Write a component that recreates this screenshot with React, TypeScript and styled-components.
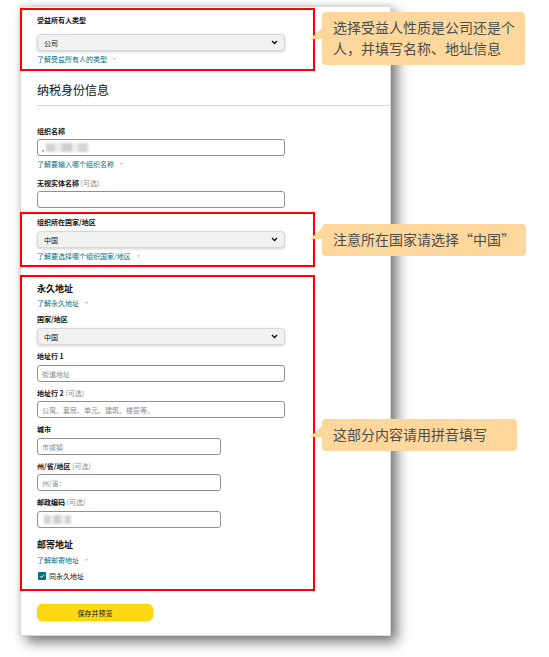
import React from 'react';
import styled, { createGlobalStyle } from 'styled-components';

const GlobalStyle = createGlobalStyle`
  html, body {
    margin: 0;
    padding: 0;
    background: #ffffff;
  }
  body {
    font-family: "Noto Sans CJK SC", "Noto Sans", "Liberation Sans", sans-serif;
    color: #0f1111;
  }
`;

const Page = styled.div`
  position: relative;
  width: 549px;
  height: 657px;
  box-sizing: border-box;
  padding: 6px 0 0 20px;
  overflow: hidden;
`;

const Card = styled.div`
  width: 371px;
  height: 630px;
  box-sizing: border-box;
  background: #ffffff;
  border: 1px solid #d9d9d9;
  box-shadow: 6px 6px 12px rgba(0, 0, 0, 0.55), -1px -1px 4px rgba(0, 0, 0, 0.08);
  padding: 1px 0 0 16px;
`;

const Marked = styled.div<{ $mt?: number; $pt: number; $pb: number }>`
  width: 295px;
  box-sizing: border-box;
  margin: ${(p) => p.$mt ?? 0}px 0 0 -17px;
  border: 2px solid #ff0000;
  padding: ${(p) => p.$pt}px 0 ${(p) => p.$pb}px 15px;
`;

const Label = styled.div<{ $mt?: number }>`
  margin-top: ${(p) => p.$mt ?? 0}px;
  font-size: 7px;
  line-height: 10px;
  font-weight: 700;
  white-space: nowrap;
`;

const Optional = styled.span`
  font-weight: 400;
  color: #8a8d8d;
`;

const Heading = styled.div<{ $mt?: number; $size: number }>`
  margin-top: ${(p) => p.$mt ?? 0}px;
  font-size: ${(p) => p.$size}px;
  line-height: ${(p) => p.$size + 4}px;
  font-weight: ${(p) => (p.$size > 10 ? 400 : 700)};
  white-space: nowrap;
`;

const Divider = styled.div`
  margin-top: 7px;
  height: 1px;
  background: #d5d5d5;
`;

const SelectBox = styled.div<{ $mt?: number }>`
  margin-top: ${(p) => p.$mt ?? 0}px;
  width: 248px;
  height: 17px;
  box-sizing: border-box;
  display: flex;
  align-items: center;
  justify-content: space-between;
  padding: 0 6px 0 6px;
  background: #f0f2f2;
  border: 1px solid #d5d9d9;
  border-radius: 4px;
  box-shadow: 0 1px 3px rgba(15, 17, 17, 0.2);
  font-size: 7px;
  line-height: 10px;
`;

const TextInput = styled.div<{ $mt?: number; $short?: boolean }>`
  margin-top: ${(p) => p.$mt ?? 0}px;
  width: ${(p) => (p.$short ? 184 : 248)}px;
  height: 17px;
  box-sizing: border-box;
  display: flex;
  align-items: center;
  padding: 0 4px;
  background: #ffffff;
  border: 1px solid #8f9393;
  border-radius: 3px;
  font-size: 7px;
  line-height: 10px;
  color: #0f1111;
`;

const Placeholder = styled.span`
  color: #8a8d8d;
`;

const Blurred = styled.span<{ $w: number }>`
  display: inline-block;
  width: ${(p) => p.$w}px;
  height: 9px;
  margin-left: 2px;
  background: linear-gradient(
    90deg,
    #d4d4d4 0 22%,
    #ececec 22% 38%,
    #cfcfcf 38% 62%,
    #eeeeee 62% 76%,
    #d6d6d6 76% 100%
  );
  filter: blur(0.8px);
`;

const HelpLink = styled.div<{ $mt?: number }>`
  margin-top: ${(p) => p.$mt ?? 0}px;
  display: flex;
  align-items: center;
  gap: 5px;
  font-size: 7px;
  line-height: 10px;
  color: #007185;
  white-space: nowrap;
`;

const CheckRow = styled.label`
  margin-top: 6px;
  display: flex;
  align-items: center;
  gap: 3px;
  padding-left: 1px;
  font-size: 7px;
  line-height: 10px;
`;

const CheckBox = styled.span`
  width: 8px;
  height: 8px;
  border-radius: 1px;
  background: #007185;
  display: flex;
  align-items: center;
  justify-content: center;
`;

const SaveButton = styled.button`
  margin-top: 13px;
  width: 116px;
  height: 17px;
  padding: 0;
  background: #ffd814;
  border: 1px solid #fcd200;
  border-radius: 5px;
  box-shadow: 0 1px 2px rgba(213, 217, 217, 0.5);
  font-family: inherit;
  font-size: 7px;
  line-height: 10px;
  color: #0f1111;
`;

const Callout = styled.div<{ $top: number; $w: number; $arrow: number }>`
  position: absolute;
  top: ${(p) => p.$top}px;
  left: 322px;
  width: ${(p) => p.$w}px;
  box-sizing: border-box;
  padding: 5px 8px 6px 11px;
  background: #fed79d;
  border-radius: 4px;
  font-size: 14px;
  line-height: 21px;
  color: #4d4d4d;

  &::before {
    content: '';
    position: absolute;
    left: -12px;
    top: ${(p) => p.$arrow}px;
    border-top: 11px solid transparent;
    border-right: 12px solid #fed79d;
  }
`;

const Chevron = ({ small }: { small?: boolean }) =>
  small ? (
    <svg width="5" height="4" viewBox="0 0 5 4">
      <path d="M1 1l1.5 1.5L4 1" fill="none" stroke="#9aa0a0" strokeWidth="0.8" />
    </svg>
  ) : (
    <svg width="7" height="5" viewBox="0 0 7 5">
      <path d="M1 1l2.5 2.5L6 1" fill="none" stroke="#0f1111" strokeWidth="1.4" />
    </svg>
  );

const Check = () => (
  <svg width="6" height="6" viewBox="0 0 6 6">
    <path d="M1 3.2l1.4 1.4L5 1.6" fill="none" stroke="#ffffff" strokeWidth="1" />
  </svg>
);

const Select = ({ value, mt }: { value: string; mt: number }) => (
  <SelectBox $mt={mt}>
    <span>{value}</span>
    <Chevron />
  </SelectBox>
);

const Help = ({ text, mt }: { text: string; mt: number }) => (
  <HelpLink $mt={mt}>
    <span>{text}</span>
    <Chevron small />
  </HelpLink>
);

export default function App() {
  return (
    <Page>
      <GlobalStyle />
      <Card>
        <Marked $pt={5} $pb={5}>
          <Label>受益所有人类型</Label>
          <Select value="公司" mt={9} />
          <Help text="了解受益所有人的类型" mt={3} />
        </Marked>

        <Heading $size={12} $mt={11}>纳税身份信息</Heading>
        <Divider />

        <Label $mt={20}>组织名称</Label>
        <TextInput $mt={3}>
          <span>,</span>
          <Blurred $w={42} />
        </TextInput>
        <Help text="了解要输入哪个组织名称" mt={3} />
        <Label $mt={9}>
          无视实体名称 <Optional>(可选)</Optional>
        </Label>
        <TextInput $mt={3} />

        <Marked $mt={4} $pt={3} $pb={4}>
          <Label>组织所在国家/地区</Label>
          <Select value="中国" mt={4} />
          <Help text="了解要选择哪个组织国家/地区" mt={3} />
        </Marked>

        <Marked $mt={8} $pt={5} $pb={8}>
          <Heading $size={9}>永久地址</Heading>
          <Help text="了解永久地址" mt={3} />
          <Label $mt={6}>国家/地区</Label>
          <Select value="中国" mt={4} />
          <Label $mt={6}>地址行 1</Label>
          <TextInput $mt={4}>
            <Placeholder>街道地址</Placeholder>
          </TextInput>
          <Label $mt={6}>
            地址行 2 <Optional>(可选)</Optional>
          </Label>
          <TextInput $mt={3}>
            <Placeholder>公寓、套房、单元、建筑、楼层等。</Placeholder>
          </TextInput>
          <Label $mt={6}>城市</Label>
          <TextInput $mt={4} $short>
            <Placeholder>市或镇</Placeholder>
          </TextInput>
          <Label $mt={6}>
            州/省/地区 <Optional>(可选)</Optional>
          </Label>
          <TextInput $mt={3} $short>
            <Placeholder>州/省：</Placeholder>
          </TextInput>
          <Label $mt={6}>
            邮政编码 <Optional>(可选)</Optional>
          </Label>
          <TextInput $mt={4} $short>
            <Blurred $w={27} />
          </TextInput>
          <Heading $size={9} $mt={10}>邮寄地址</Heading>
          <Help text="了解邮寄地址" mt={4} />
          <CheckRow>
            <CheckBox>
              <Check />
            </CheckBox>
            <span>同永久地址</span>
          </CheckRow>
        </Marked>

        <SaveButton>保存并预览</SaveButton>
      </Card>

      <Callout $top={12} $w={203} $arrow={16}>
        选择受益人性质是公司还是个人，并填写名称、地址信息
      </Callout>
      <Callout $top={224} $w={204} $arrow={4}>
        注意所在国家请选择“中国”
      </Callout>
      <Callout $top={419} $w={195} $arrow={7}>
        这部分内容请用拼音填写
      </Callout>
    </Page>
  );
}
